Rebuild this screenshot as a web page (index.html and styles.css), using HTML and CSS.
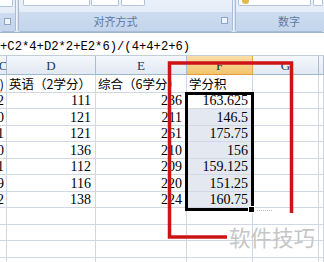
FILE: index.html
```html
<!DOCTYPE html>
<html lang="zh-CN">
<head>
    <meta charset="UTF-8">
    <meta name="viewport" content="width=device-width, initial-scale=1.0">
    <title>学分积</title>
    <link rel="stylesheet" href="styles.css">
</head>
<body>

<div class="ribbon">
    <div class="group group-font">
        <div class="group-body"><span class="btn btn-font"></span></div>
        <div class="group-label"><span class="launcher"></span></div>
    </div>
    <div class="group group-align">
        <div class="group-body">
            <span class="btn btn-wrap"></span><span class="btn btn-merge"></span><span class="btn btn-small"></span>
        </div>
        <div class="group-label">对齐方式<span class="launcher"></span></div>
    </div>
    <div class="group group-number">
        <div class="group-body">
            <span class="btn btn-money"><i class="coin"></i></span><span class="btn btn-pct"></span>
        </div>
        <div class="group-label">数字</div>
    </div>
</div>

<div class="formula-bar">+C2*4+D2*2+E2*6)/(4+4+2+6)</div>

<div class="sheet">
    <div class="cell head">C</div><div class="cell head">D</div><div class="cell head">E</div><div class="cell head picked">F</div><div class="cell head">G</div><div class="cell head"></div>

    <div class="cell title"><span>数学(4学分)</span></div><div class="cell title"><span>英语（2学分）</span></div><div class="cell title"><span>综合（6学分）</span></div><div class="cell title"><span>学分积</span></div><div class="cell"></div><div class="cell"></div>

    <div class="cell num"><span>122</span></div><div class="cell num"><span>111</span></div><div class="cell num"><span>236</span></div><div class="cell num"><span>163.625</span></div><div class="cell"></div><div class="cell"></div>
    <div class="cell num"><span>100</span></div><div class="cell num"><span>121</span></div><div class="cell num"><span>211</span></div><div class="cell num shade"><span>146.5</span></div><div class="cell"></div><div class="cell"></div>
    <div class="cell num"><span>121</span></div><div class="cell num"><span>121</span></div><div class="cell num"><span>261</span></div><div class="cell num shade"><span>175.75</span></div><div class="cell"></div><div class="cell"></div>
    <div class="cell num"><span>120</span></div><div class="cell num"><span>136</span></div><div class="cell num"><span>210</span></div><div class="cell num shade"><span>156</span></div><div class="cell"></div><div class="cell"></div>
    <div class="cell num"><span>131</span></div><div class="cell num"><span>112</span></div><div class="cell num"><span>209</span></div><div class="cell num shade"><span>159.125</span></div><div class="cell"></div><div class="cell"></div>
    <div class="cell num"><span>109</span></div><div class="cell num"><span>116</span></div><div class="cell num"><span>220</span></div><div class="cell num shade"><span>151.25</span></div><div class="cell"></div><div class="cell"></div>
    <div class="cell num"><span>112</span></div><div class="cell num"><span>138</span></div><div class="cell num"><span>224</span></div><div class="cell num shade"><span>160.75</span></div><div class="cell"></div><div class="cell"></div>

    <div class="cell"></div><div class="cell"></div><div class="cell"></div><div class="cell"></div><div class="cell"></div><div class="cell"></div>
    <div class="cell"></div><div class="cell"></div><div class="cell"></div><div class="cell"></div><div class="cell"></div><div class="cell"></div>
    <div class="cell"></div><div class="cell"></div><div class="cell"></div><div class="cell"></div><div class="cell"></div><div class="cell"></div>
    <div class="cell"></div><div class="cell"></div><div class="cell"></div><div class="cell"></div><div class="cell"></div><div class="cell"></div>
</div>

<!-- things drawn over the sheet -->
<div class="selection"></div>
<div class="fill-handle"></div>
<div class="fill-trail"></div>

<svg class="mark" viewBox="0 0 324 262" width="324" height="262">
    <polyline points="227,237 169.5,237 169.5,63 291.5,63 291.5,213" fill="none" stroke="#cc1416" stroke-width="3.5"/>
</svg>

<div class="watermark">软件技巧</div>

</body>
</html>
```

FILE: styles.css
```css
body {
    margin: 0;
    width: 324px;
    height: 262px;
    overflow: hidden;
    position: relative;
    background: #fff;
    font-family: "Noto Sans CJK SC", sans-serif;
}

/* ribbon */
.ribbon {
    display: flex;
    height: 33px;
    background: #d6e3f3;
    border-bottom: 1px solid #9db4d2;
    box-sizing: border-box;
}
.group {
    display: flex;
    flex-direction: column;
    box-sizing: border-box;
    height: 32px;
    border: 1px solid #a8bcd7;
    border-top: none;
    border-radius: 0 0 3px 3px;
    background: linear-gradient(#e9f0f9, #dfe9f6);
    box-shadow: 1px 0 0 #f3f7fc;
}
.group-font {
    width: 16px;
    border-left: none;
    margin-right: 2px;
}
.group-align {
    width: 215px;
    margin-right: 2px;
}
.group-number {
    flex: 1;
    border-right: none;
}
.group-body {
    height: 13px;
    position: relative;
    display: flex;
    align-items: flex-start;
}
.group-label {
    flex: 1;
    background: linear-gradient(#cddcf0, #c3d5ec);
    color: #5d79a4;
    font-size: 11px;
    line-height: 19px;
    text-align: center;
    position: relative;
}
.group-align .group-label {
    padding-right: 20px;
}
.group-number .group-label {
    text-align: left;
    padding-left: 42px;
}
.launcher {
    position: absolute;
    right: 4px;
    top: 5px;
    width: 5px;
    height: 5px;
    border: 1px solid #8ea6c6;
    background: #eef3fa;
}

.btn {
    display: block;
    height: 6px;
    box-sizing: border-box;
    border: 1px solid #b2c3da;
    border-top: none;
    background: #fbfdff;
    border-radius: 0 0 2px 2px;
}
.btn-font { width: 14px; height: 7px; margin-left: -1px; }
.btn-wrap { width: 67px; margin-left: 4px; }
.btn-merge { width: 28px; margin-left: 1px; }
.btn-small { width: 24px; margin-left: 2px; }
.btn-money { width: 73px; margin-left: 2px; position: relative; }
.btn-pct { width: 10px; margin-left: 2px; }
.coin {
    position: absolute;
    left: 3px;
    top: 0;
    width: 7px;
    height: 4px;
    border-radius: 0 0 4px 4px;
    background: #e2b84a;
}

/* formula bar */
.formula-bar {
    height: 23px;
    box-sizing: border-box;
    padding-top: 7px;
    font-family: "Liberation Mono", monospace;
    font-size: 12.2px;
    line-height: 15px;
    color: #000;
    white-space: nowrap;
    border-bottom: 1px solid #c3ccd9;
}

/* sheet grid */
.sheet {
    display: grid;
    grid-template-columns: 7px 89px 91px 66px 66px 1fr;
    grid-template-rows: 19px 18px 16px 17px 16px 17px 16px 17px 16px 17px 16px 17px 16px;
}
.cell {
    box-sizing: border-box;
    border-right: 1px solid #d0d7e5;
    border-bottom: 1px solid #d0d7e5;
    overflow: hidden;
    display: flex;
    align-items: flex-end;
    white-space: nowrap;
}
.cell span {
    flex-shrink: 0;
}
.head {
    justify-content: center;
    align-items: center;
    padding-top: 2px;
    background: linear-gradient(#f4f7fc, #e2e9f3);
    border-right-color: #a9bdd5;
    border-bottom-color: #9eb6ce;
    color: #22385a;
    font-family: "Liberation Serif", serif;
    font-size: 13px;
}
.head.picked {
    background: linear-gradient(#f9dea8, #f2c36b);
    border-right-color: #e3a64a;
    border-bottom-color: #e39b3c;
    color: #2f2a20;
}
.title {
    font-size: 12.5px;
    line-height: 16px;
    padding: 0 2px;
    color: #000;
}
.num {
    justify-content: flex-end;
    font-family: "Liberation Serif", serif;
    font-size: 14px;
    line-height: 14px;
    padding: 0 4px 0 0;
    color: #000;
}
.num.shade {
    background: #e3e8f1;
}
.sheet .cell:nth-child(6n+1).num,
.sheet .cell:nth-child(6n+1).title {
    padding-right: 2px;
    justify-content: flex-end;
}

/* overlays */
.selection {
    position: absolute;
    left: 185px;
    top: 92px;
    width: 69px;
    height: 119px;
    box-sizing: border-box;
    border: 3px solid #000;
}
.fill-handle {
    position: absolute;
    left: 249px;
    top: 207px;
    width: 5px;
    height: 5px;
    background: #000;
    outline: 1px solid #fff;
}
.fill-trail {
    position: absolute;
    left: 257px;
    top: 210px;
    width: 15px;
    border-top: 1px dotted #b9b9b9;
}
.mark {
    position: absolute;
    left: 0;
    top: 0;
}
.watermark {
    position: absolute;
    left: 229px;
    top: 223px;
    font-size: 21.5px;
    line-height: 28px;
    color: #c6c6c6;
    white-space: nowrap;
}
```
